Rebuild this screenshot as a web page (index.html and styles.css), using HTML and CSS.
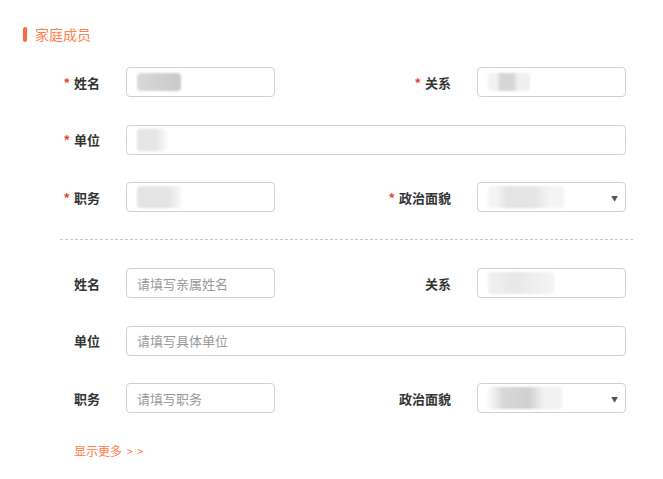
FILE: index.html
```html
<!doctype html>
<html lang="zh">
<head>
    <meta charset="utf-8">
    <title>家庭成员</title>
    <link rel="stylesheet" href="styles.css">
</head>
<body>

    <!-- section title -->
    <div class="Title"><span class="Title-bar"></span>家庭成员</div>

    <!-- member 1 -->
    <div class="Form">
        <label class="Label"><i>*</i>姓名</label>
        <div class="Box"><span class="Blur Blur-a"></span></div>
        <label class="Label"><i>*</i>关系</label>
        <div class="Box"><span class="Blur Blur-b"></span></div>

        <label class="Label"><i>*</i>单位</label>
        <div class="Box Box-wide"><span class="Blur Blur-c"></span></div>

        <label class="Label"><i>*</i>职务</label>
        <div class="Box"><span class="Blur Blur-d"></span></div>
        <label class="Label"><i>*</i>政治面貌</label>
        <div class="Box Box-select"><span class="Blur Blur-e"></span><span class="Arrow">▼</span></div>
    </div>

    <div class="Divider"></div>

    <!-- member 2 -->
    <div class="Form">
        <label class="Label">姓名</label>
        <div class="Box"><span class="Hint">请填写亲属姓名</span></div>
        <label class="Label">关系</label>
        <div class="Box"><span class="Blur Blur-f"></span></div>

        <label class="Label">单位</label>
        <div class="Box Box-wide"><span class="Hint">请填写具体单位</span></div>

        <label class="Label">职务</label>
        <div class="Box"><span class="Hint">请填写职务</span></div>
        <label class="Label">政治面貌</label>
        <div class="Box Box-select"><span class="Blur Blur-g"></span><span class="Arrow">▼</span></div>
    </div>

    <div class="More">显示更多 <span class="More-arrows">&gt; &gt;</span></div>

</body>
</html>
```

FILE: styles.css
```css
*, *:before, *:after {
    box-sizing: border-box;
    margin: 0;
    padding: 0;
}

body {
    width: 663px;
    height: 479px;
    background: #fff;
    font-family: "Microsoft YaHei", "Noto Sans CJK SC", sans-serif;
    font-size: 13px;
    color: #333;
}

.Title {
    display: flex;
    align-items: center;
    height: 16px;
    margin: 26px 0 0 23px;
    color: #ff8052;
    font-size: 14px;
}

.Title-bar {
    width: 4px;
    height: 15px;
    margin-right: 8px;
    border-radius: 2px;
    background: #ff6a3d;
}

.Form {
    display: grid;
    grid-template-columns: 126px 149px 202px 149px;
    grid-auto-rows: 30px;
    row-gap: 27.5px;
    align-items: center;
}

.Title + .Form {
    margin-top: 25px;
}

.Label {
    padding-right: 26px;
    text-align: right;
    font-weight: 600;
    color: #333;
}

.Label i {
    margin-right: 4px;
    font-style: normal;
    color: #f0412e;
}

.Box {
    position: relative;
    display: flex;
    align-items: center;
    height: 30px;
    padding: 0 10px;
    border: 1px solid #d0d0d0;
    border-radius: 4px;
    background: #fff;
    overflow: hidden;
}

.Box-wide {
    grid-column: 2 / 5;
}

.Hint {
    color: #999;
}

.Arrow {
    position: absolute;
    right: 7px;
    top: 10px;
    font-size: 7px;
    color: #555;
}

/* blurred redacted values */
.Blur {
    display: block;
    height: 18px;
    filter: blur(1px);
    border-radius: 4px;
}

.Blur-a { width: 44px; background: linear-gradient(90deg, #d9d9d9, #cfcfcf 60%, #cacaca); }
.Blur-b { width: 42px; background: linear-gradient(90deg, #f2f2f2 20%, #d6d6d6 30%, #d6d6d6 60%, #efefef 70%); }
.Blur-c { width: 30px; height: 22px; background: linear-gradient(90deg, #e6e6e6 60%, #fafafa); }
.Blur-d { width: 44px; height: 22px; background: linear-gradient(90deg, #e4e4e4 70%, #f8f8f8); }
.Blur-e { width: 76px; height: 22px; background: linear-gradient(90deg, #f4f4f4 10%, #e4e4e4 25%, #e4e4e4 60%, #f4f4f4 80%); }
.Blur-f { width: 66px; height: 22px; background: linear-gradient(90deg, #f0f0f0, #e8e8e8 40%, #f4f4f4); }
.Blur-g { width: 74px; height: 22px; background: linear-gradient(90deg, #f4f4f4 5%, #d8d8d8 20%, #d0d0d0 55%, #f2f2f2 75%); }

.Divider {
    height: 0;
    margin: 27px 30px 28px 60px;
    border-top: 1px dashed #c8c8c8;
}

.More {
    margin: 29px 0 0 74px;
    color: #ff7a45;
    font-size: 12px;
}

.More-arrows {
    margin-left: 2px;
    font-size: 11px;
    letter-spacing: 1px;
}
```
